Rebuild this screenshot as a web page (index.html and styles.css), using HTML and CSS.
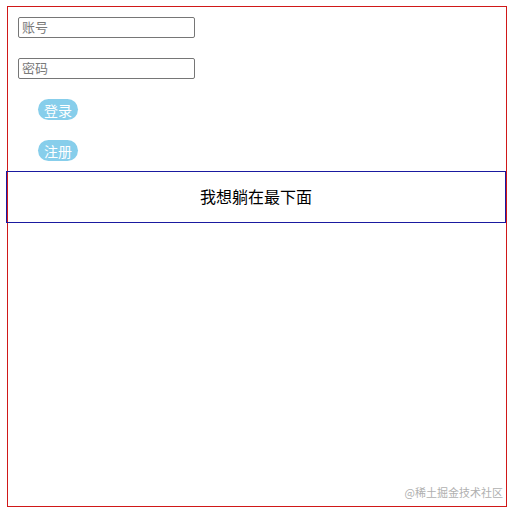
FILE: index.html
```html
<!DOCTYPE html>
<html lang="zh">
<head>
<meta charset="utf-8">
<link rel="stylesheet" href="styles.css">
</head>
<body>
<div class="page">
  <div class="form">
    <input class="field" type="text" placeholder="账号">
    <input class="field" type="password" placeholder="密码">
    <button class="btn">登录</button>
    <button class="btn">注册</button>
  </div>
  <div class="footer">我想躺在最下面</div>
</div>
<div class="watermark">@稀土掘金技术社区</div>
</body>
</html>
```
FILE: styles.css
```css
html, body {
  margin: 0;
  padding: 0;
  background: #ffffff;
}
body {
  font-family: "Noto Sans CJK SC", "Liberation Sans", sans-serif;
  position: relative;
  width: 516px;
  height: 513px;
}
.page {
  margin: 6px 0 0 7px;
  width: 500px;
  height: 501px;
  box-sizing: border-box;
  border: 1px solid #d01818;
}
.form {
  display: flex;
  flex-direction: column;
  align-items: flex-start;
  gap: 20px;
  padding: 10px 0 0 10px;
}
.field {
  width: 177px;
  height: 21px;
  box-sizing: border-box;
  margin: 0;
  border: 1px solid #767676;
  border-radius: 2px;
  padding: 0 0 2px 3px;
  font-family: "Noto Sans CJK SC", sans-serif;
  font-size: 13px;
  line-height: 17px;
  outline: none;
}
.field::placeholder {
  color: #7a7a7a;
}
.btn {
  margin: 0 0 0 20px;
  width: 40px;
  height: 21px;
  padding: 0;
  border: none;
  border-radius: 11px;
  background: #87ceeb;
  color: #ffffff;
  font-family: "Noto Sans CJK SC", sans-serif;
  font-size: 14px;
  line-height: 20px;
}
.footer {
  margin: 10px 0 0 -2px;
  width: 500px;
  height: 52px;
  box-sizing: border-box;
  border: 1px solid #1a1aa0;
  padding-bottom: 2px;
  display: flex;
  align-items: center;
  justify-content: center;
  font-size: 16px;
  color: #000000;
}
.watermark {
  position: absolute;
  right: 13px;
  top: 484px;
  font-size: 11px;
  line-height: 16px;
  color: #b0b0b0;
}
```
